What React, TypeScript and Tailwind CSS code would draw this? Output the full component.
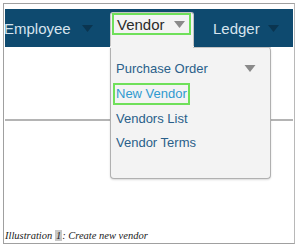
import React from "react";

function Tri({ color, w = 11, h = 7 }: { color: string; w?: number; h?: number }) {
  return (
    <svg width={w} height={h} viewBox="0 0 11 7" className="block">
      <polygon points="0,0 11,0 5.5,7" fill={color} />
    </svg>
  );
}

export default function App() {
  return (
    <div
      className="relative w-[300px] h-[247px] bg-white overflow-hidden"
      style={{ fontFamily: '"Liberation Sans", Arial, sans-serif' }}
    >
      <div className="absolute left-[3px] top-[3px] w-[292px] h-[241px] border border-[#a0a0a0] border-r-[#b8b8b8] flex flex-col">
        <div className="mt-[5px] ml-[1px] mr-[1px] h-[38px] bg-[#0e4a6f] flex items-center text-[15px] text-[#d6e4ee] overflow-hidden">
          <div className="flex items-center -ml-[1px] w-[106px]">
            <span className="leading-none">Employee</span>
            <span className="ml-[11px]"><Tri color="#0a3550" /></span>
          </div>
          <div className="w-[103px]" />
          <div className="flex items-center">
            <span className="leading-none">Ledger</span>
            <span className="ml-[8px]"><Tri color="#0a3550" /></span>
          </div>
        </div>
        <div className="h-[72px]" />
        <div className="h-[2px] bg-[#b4b4b4] mx-[1px]" />
        <div className="flex-1" />
        <div
          className="pl-[1px] pb-[2px] text-[10.5px] italic text-[#222] leading-none"
          style={{ fontFamily: '"Liberation Serif", "Times New Roman", serif' }}
        >
          Illustration <span className="bg-[#c8c8c8] px-[1px]">1</span>: Create new vendor
        </div>
      </div>

      {/* Vendor tab */}
      <div className="absolute left-[110px] top-[12px] w-[84px] h-[38px] bg-[#f3f3f3] rounded-t-[3px] border border-b-0 border-[#c4c4c4]" />
      <div className="absolute left-[112px] top-[13px] w-[79px] h-[22px] border-2 border-[#6fe05a] flex items-center text-[15px] text-[#2b2b2b]">
        <span className="ml-[3px] leading-none">Vendor</span>
        <span className="ml-[9px]"><Tri color="#8a8a8a" /></span>
      </div>

      {/* Dropdown panel */}
      <div className="absolute left-[110px] top-[47px] w-[161px] h-[132px] bg-[#f3f3f3] border border-t-0 border-[#b0b0b0] rounded-b-[4px] rounded-tr-[4px] shadow-[0_1px_2px_rgba(0,0,0,0.15)] text-[13px]">
        <div className="absolute left-[-1px] top-[-1px] w-[84px] h-[2px] bg-[#f3f3f3]" />
        <div className="absolute left-[82px] right-[-1px] top-0 h-px bg-[#c4c4c4] rounded-tr-[4px]" />
        <div className="flex flex-col pl-[5px] pt-[9px] text-[#2a5f8a]">
          <div className="h-[25px] flex items-center justify-between pr-[14px]">
            <span className="leading-none">Purchase Order</span>
            <Tri color="#8a8a8a" w={12} h={7} />
          </div>
          <div className="h-[25px] flex items-center">
            <span className="leading-none text-[#2f9ad0] -ml-[3px] border-2 border-[#6fe05a] px-[1px] h-[22px] flex items-center">New Vendor</span>
          </div>
          <div className="h-[24px] flex items-center">
            <span className="leading-none">Vendors List</span>
          </div>
          <div className="h-[25px] flex items-center">
            <span className="leading-none">Vendor Terms</span>
          </div>
        </div>
      </div>
    </div>
  );
}
